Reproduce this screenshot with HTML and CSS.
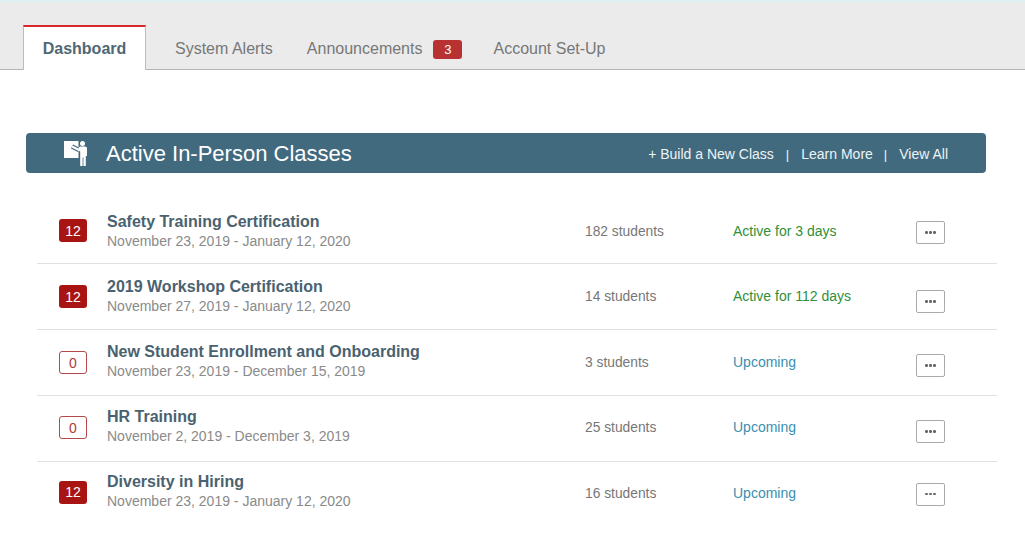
FILE: index.html
```html
<!DOCTYPE html>
<html lang="en">
<head>
<meta charset="utf-8">
<title>Dashboard</title>
<link rel="stylesheet" href="styles.css">
</head>
<body>
<header class="tabbar">
  <nav class="tabs">
    <a class="tab tab-active">Dashboard</a>
    <a class="tab tab-alerts">System Alerts</a>
    <a class="tab tab-ann">Announcements <span class="tab-badge">3</span></a>
    <a class="tab tab-acct">Account Set-Up</a>
  </nav>
</header>
<main class="content">
  <section class="banner">
    <svg class="banner-icon" width="25" height="27" viewBox="0 0 25 27">
      <rect x="1" y="1" width="14.500" height="17" fill="#fff"/>
      <path d="M9 6.500l7 3.500" fill="none" stroke="#426a7f" stroke-width="4.500"/>
      <path d="M9 6.500l7 3.500" fill="none" stroke="#fff" stroke-width="2"/>
      <circle cx="19.500" cy="3.600" r="2.500" fill="#fff"/>
      <path fill="#fff" d="M15.500 8.500c0-1.300.8-2 2-2h4.500c1.200 0 2 .8 2 2v7.500h-1.200v10h-2.400v-8.500h-.8v8.500h-2.400V11.500l-1.700-1z"/>
    </svg>
    <h1 class="banner-title">Active In-Person Classes</h1>
    <div class="banner-links">
      <a>+ Build a New Class</a><span class="sep">|</span><a>Learn More</a><span class="sep sep-last">|</span><a>View All</a>
    </div>
  </section>
  <ul class="rows">
    <li class="row">
      <span class="count count-full">12</span>
      <div class="info"><div class="name">Safety Training Certification</div><div class="dates">November 23, 2019 - January 12, 2020</div></div>
      <div class="students">182 students</div>
      <div class="status active">Active for 3 days</div>
      <button class="more"><i></i><i></i><i></i></button>
    </li>
    <li class="row">
      <span class="count count-full">12</span>
      <div class="info"><div class="name">2019 Workshop Certification</div><div class="dates">November 27, 2019 - January 12, 2020</div></div>
      <div class="students">14 students</div>
      <div class="status active">Active for 112 days</div>
      <button class="more"><i></i><i></i><i></i></button>
    </li>
    <li class="row">
      <span class="count count-empty">0</span>
      <div class="info"><div class="name">New Student Enrollment and Onboarding</div><div class="dates">November 23, 2019 - December 15, 2019</div></div>
      <div class="students">3 students</div>
      <div class="status upcoming">Upcoming</div>
      <button class="more"><i></i><i></i><i></i></button>
    </li>
    <li class="row">
      <span class="count count-empty">0</span>
      <div class="info"><div class="name">HR Training</div><div class="dates">November 2, 2019 - December 3, 2019</div></div>
      <div class="students">25 students</div>
      <div class="status upcoming">Upcoming</div>
      <button class="more"><i></i><i></i><i></i></button>
    </li>
    <li class="row">
      <span class="count count-full">12</span>
      <div class="info"><div class="name">Diversity in Hiring</div><div class="dates">November 23, 2019 - January 12, 2020</div></div>
      <div class="students">16 students</div>
      <div class="status upcoming">Upcoming</div>
      <button class="more"><i></i><i></i><i></i></button>
    </li>
  </ul>
</main>
</body>
</html>
```
FILE: styles.css
```css
* { box-sizing: border-box; }
html, body { margin: 0; padding: 0; }
body { width: 1025px; height: 558px; overflow: hidden; background: #fff; font-family: "Liberation Sans", Arial, sans-serif; color: #666; }
.tabbar { height: 70px; padding: 23px 0 0 23px; background: #ebebeb; border-top: 2px solid #dff1f5; border-bottom: 1px solid #b4b4b4; }
.tabs { display: flex; align-items: stretch; height: 45px; }
.tab { display: flex; align-items: center; font-size: 16px; color: #777; padding-top: 3px; }
.tab-active { width: 123px; justify-content: center; background: #fff; border: 1px solid #bdbdbd; border-top: 2px solid #d9282e; border-bottom: 0; font-weight: bold; color: #4f6875; padding-top: 1px; }
.tab-alerts { margin-left: 29px; }
.tab-ann { margin-left: 34px; }
.tab-acct { margin-left: 31px; }
.tab-badge { display: inline-flex; align-items: center; justify-content: center; width: 29px; height: 19px; margin-left: 11px; background: #b83232; border-radius: 3px; color: #fff; font-size: 13px; }
.content { padding: 63px 0 0 26px; }
.banner { display: flex; align-items: center; width: 960px; height: 40px; background: #426a7f; border-radius: 4px; color: #fff; }
.banner-icon { margin-left: 37px; flex: none; }
.banner-title { margin: 2px 0 0 18px; font-size: 22px; font-weight: normal; color: #fff; }
.banner-links { margin-left: auto; padding: 2px 38px 0 0; display: flex; align-items: center; font-size: 14px; color: #eef3f5; }
.sep { margin: 0 12px; font-size: 13px; }
.sep-last { margin-left: 11px; }
.rows { list-style: none; margin: 25px 0 0 11px; padding: 0; width: 960px; }
.row { display: flex; align-items: center; height: 66px; border-bottom: 1px solid #e0e0e0; }
.row:last-child { border-bottom: 0; }
.count { display: flex; align-items: center; justify-content: center; flex: none; width: 28px; height: 23px; margin-left: 22px; border-radius: 3px; font-size: 14px; }
.count-full { background: #a81411; color: #fff; }
.count-empty { background: #fff; color: #b13a3a; border: 1px solid #b4484a; }
.info { width: 478px; margin-left: 20px; }
.name { font-size: 16px; font-weight: bold; color: #4a6270; line-height: 20px; }
.dates { font-size: 14px; color: #8a8a8a; line-height: 18px; }
.students { width: 148px; font-size: 13.800px; color: #777; padding-top: 2px; }
.status { width: 183px; font-size: 14px; }
.active { color: #2f8f3a; }
.upcoming { color: #3a8fb0; }
.more { display: flex; align-items: center; justify-content: center; gap: 1.500px; width: 29px; height: 23px; margin-top: 4px; padding: 0; background: #fff; border: 1px solid #aaa; border-radius: 2px; }
.more i { display: block; width: 2.500px; height: 2.500px; background: #666; border-radius: 50%; }
.row:nth-child(2) .info { margin-bottom: 2px; }
.row:nth-child(2) .students { padding-top: 0; }
.row:nth-child(2) .status { padding-bottom: 2px; }
.row:nth-child(2) .more { margin-top: 10px; }
.row:nth-child(3) .info { margin-bottom: 4px; }
.row:nth-child(3) .students { padding-top: 0; }
.row:nth-child(3) .status { padding-bottom: 2px; }
.row:nth-child(3) .more { margin-top: 6px; }
.row:nth-child(4) .info { margin-bottom: 6px; }
.row:nth-child(4) .students { padding-top: 0; padding-bottom: 2px; }
.row:nth-child(4) .status { padding-bottom: 4px; }
.row:nth-child(4) .more { margin-top: 6px; }
.row:nth-child(4) .count { margin-bottom: 2px; }
.row:nth-child(5) .info { margin-bottom: 8px; }
.row:nth-child(5) .students { padding-top: 0; padding-bottom: 4px; }
.row:nth-child(5) .status { padding-bottom: 4px; }
.row:nth-child(5) .more { margin-top: 0; margin-bottom: 2px; }
.row:nth-child(5) .count { margin-bottom: 6px; }
```
